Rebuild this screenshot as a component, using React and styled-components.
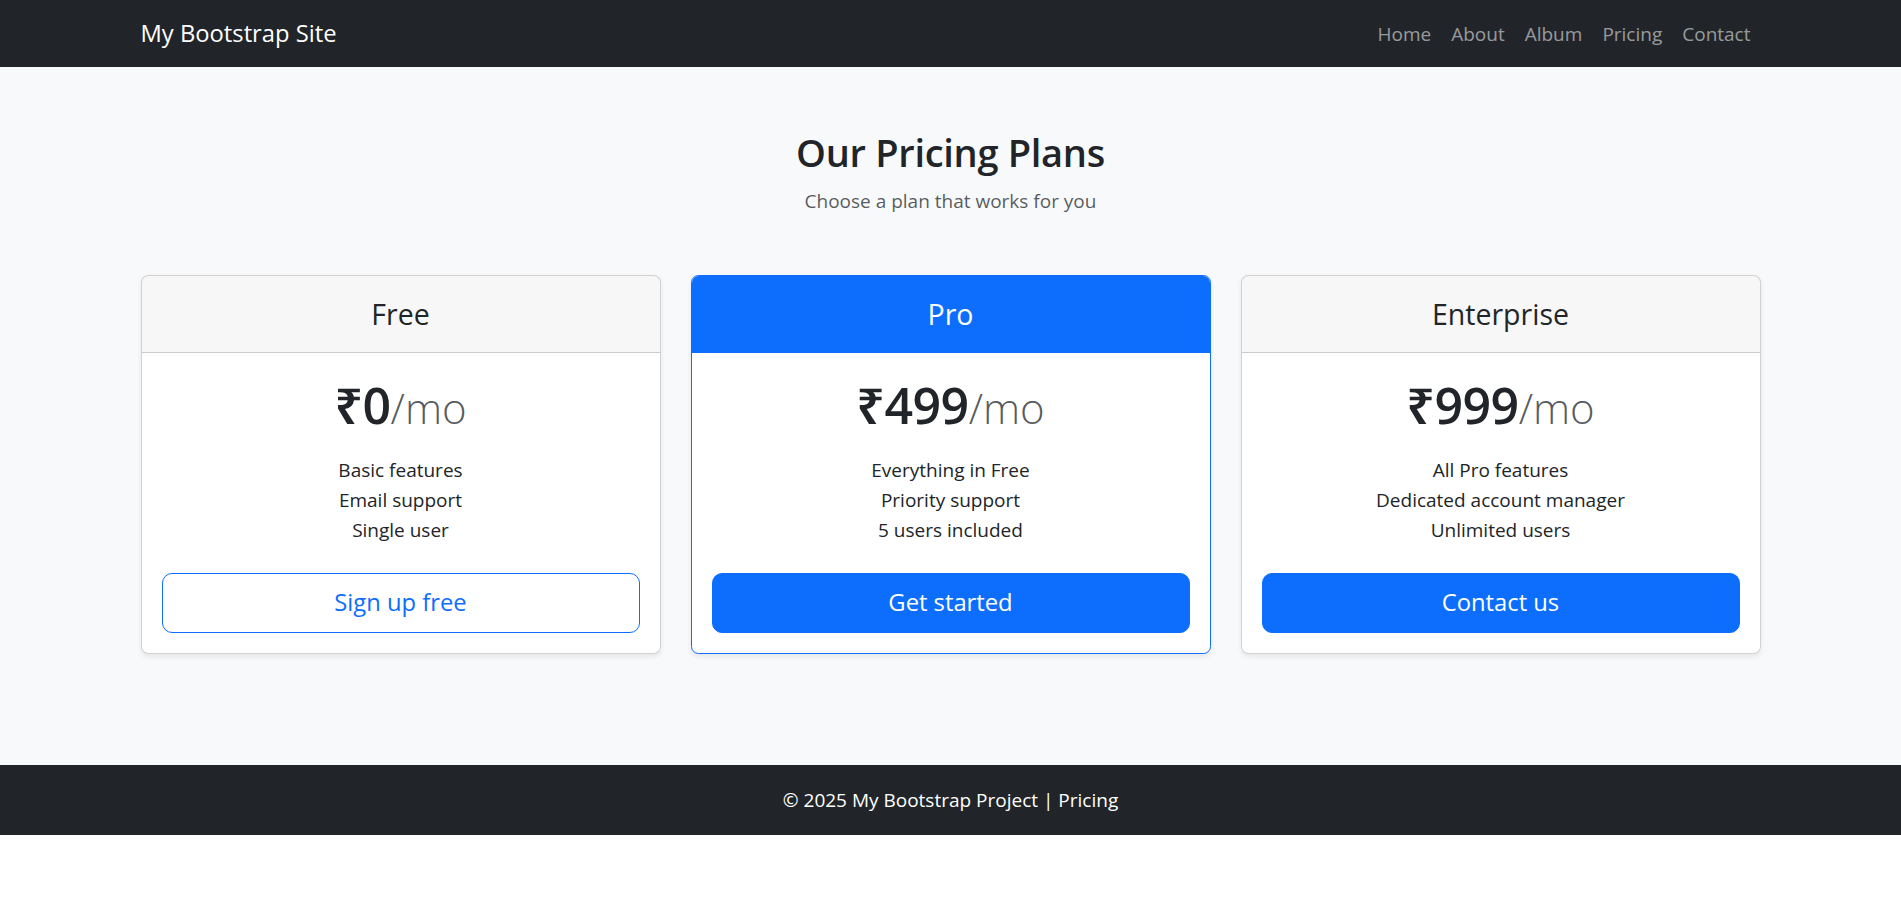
import React from "react";
import styled, { createGlobalStyle } from "styled-components";

const Global = createGlobalStyle`
  * { box-sizing: border-box; }
  html, body { margin: 0; padding: 0; background: #fff; }
  body {
    font-family: "Open Sans", "Noto Sans", "Liberation Sans", sans-serif;
    font-size: 19px;
    line-height: 30px;
    color: #212529;
  }
`;

const Navbar = styled.nav`
  background: #212529;
  height: 67px;
  display: flex;
  align-items: center;
`;

const Container = styled.div`
  width: 1650px;
  max-width: 100%;
  margin: 0 auto;
  padding: 0 15px;
`;

const NavInner = styled(Container)`
  display: flex;
  align-items: center;
  justify-content: space-between;
`;

const Brand = styled.a`
  color: #fff;
  font-size: 23.75px;
  line-height: 37px;
  text-decoration: none;
`;

const NavList = styled.ul`
  display: flex;
  list-style: none;
  margin: 0;
  padding: 0;
`;

const NavLink = styled.a`
  display: block;
  padding: 0 10px;
  color: rgba(255, 255, 255, 0.55);
  font-size: 19px;
  line-height: 30px;
  text-decoration: none;
`;

const Main = styled.main`
  background: #f8f9fa;
  padding: 61px 0 111px;
`;

const Header = styled.div`
  text-align: center;
  margin-bottom: 59px;
`;

const Title = styled.h2`
  margin: 0 0 10px;
  font-size: 38px;
  line-height: 48px;
  font-weight: 600;
  letter-spacing: -0.3px;
  color: #212529;
`;

const Subtitle = styled.p`
  margin: 0;
  color: rgba(33, 37, 41, 0.75);
`;

const Grid = styled.div`
  display: grid;
  grid-template-columns: repeat(3, 1fr);
  gap: 30px;
`;

const Card = styled.div`
  background: #fff;
  border: 1px solid ${(p) => (p.$primary ? "#0d6efd" : "rgba(0,0,0,0.175)")};
  border-radius: 7.5px;
  box-shadow: 0 2.5px 5px rgba(0, 0, 0, 0.075);
  overflow: hidden;
  text-align: center;
`;

const CardHeader = styled.div`
  padding: 20px;
  background: ${(p) => (p.$primary ? "#0d6efd" : "rgba(0,0,0,0.03)")};
  border-bottom: 1px solid ${(p) => (p.$primary ? "#0d6efd" : "rgba(0,0,0,0.175)")};
  color: ${(p) => (p.$primary ? "#fff" : "#212529")};
`;

const PlanName = styled.h4`
  margin: 0;
  font-size: 28.5px;
  line-height: 36px;
  font-weight: 400;
`;

const CardBody = styled.div`
  padding: 20px;
`;

const Price = styled.h1`
  margin: 1.5px 0 17px;
  font-size: 50px;
  line-height: 60px;
  font-weight: 600;
  letter-spacing: -0.5px;
  color: #212529;
`;

const Per = styled.small`
  font-size: 42px;
  font-weight: 300;
  letter-spacing: 0;
  color: rgba(33, 37, 41, 0.75);
`;

const Features = styled.ul`
  list-style: none;
  margin: 0 0 28px;
  padding: 0;
`;

const Button = styled.button`
  display: block;
  width: 100%;
  height: 60px;
  font-family: inherit;
  font-size: 23.75px;
  line-height: 37.5px;
  border-radius: 10px;
  border: 1px solid #0d6efd;
  background: ${(p) => (p.$outline ? "transparent" : "#0d6efd")};
  color: ${(p) => (p.$outline ? "#0d6efd" : "#fff")};
  cursor: pointer;
`;

const Footer = styled.footer`
  background: #212529;
  color: #fff;
  height: 70px;
  display: flex;
  align-items: center;
  justify-content: center;
`;

const plans = [
  { name: "Free", price: "₹0", features: ["Basic features", "Email support", "Single user"], cta: "Sign up free", outline: true },
  { name: "Pro", price: "₹499", features: ["Everything in Free", "Priority support", "5 users included"], cta: "Get started", primary: true },
  { name: "Enterprise", price: "₹999", features: ["All Pro features", "Dedicated account manager", "Unlimited users"], cta: "Contact us" },
];

export default function App() {
  return (
    <>
      <Global />
      <Navbar>
        <NavInner>
          <Brand href="#">My Bootstrap Site</Brand>
          <NavList>
            {["Home", "About", "Album", "Pricing", "Contact"].map((l) => (
              <li key={l}>
                <NavLink href="#">{l}</NavLink>
              </li>
            ))}
          </NavList>
        </NavInner>
      </Navbar>
      <Main>
        <Container>
          <Header>
            <Title>Our Pricing Plans</Title>
            <Subtitle>Choose a plan that works for you</Subtitle>
          </Header>
          <Grid>
            {plans.map((p) => (
              <Card key={p.name} $primary={p.primary}>
                <CardHeader $primary={p.primary}>
                  <PlanName>{p.name}</PlanName>
                </CardHeader>
                <CardBody>
                  <Price>
                    {p.price}
                    <Per>/mo</Per>
                  </Price>
                  <Features>
                    {p.features.map((f) => (
                      <li key={f}>{f}</li>
                    ))}
                  </Features>
                  <Button $outline={p.outline}>{p.cta}</Button>
                </CardBody>
              </Card>
            ))}
          </Grid>
        </Container>
      </Main>
      <Footer>© 2025 My Bootstrap Project | Pricing</Footer>
    </>
  );
}
